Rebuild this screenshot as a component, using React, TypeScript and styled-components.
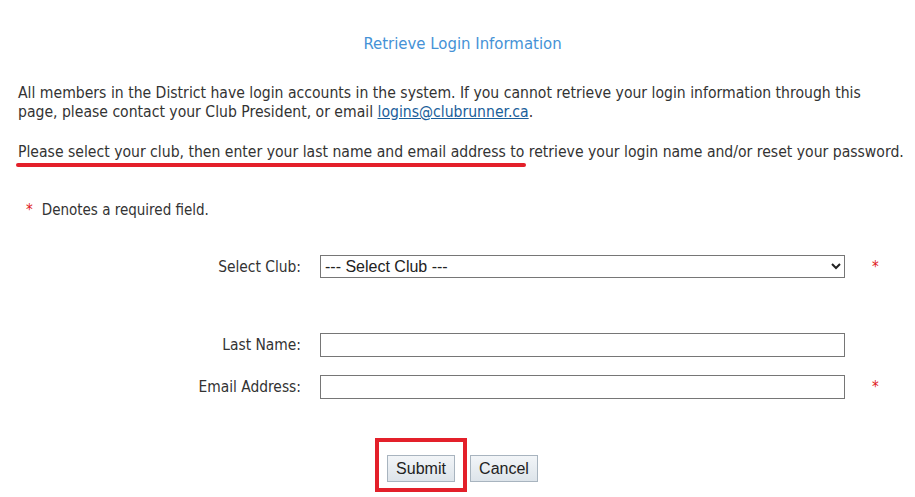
import React from 'react';
import styled, { createGlobalStyle } from 'styled-components';

const GlobalStyle = createGlobalStyle`
  html, body {
    margin: 0;
    padding: 0;
    background: #fff;
  }
  body {
    font-family: "DejaVu Sans Condensed", "DejaVu Sans", sans-serif;
    color: #333;
  }
`;

export default function App() {
  return (
    <>
      <GlobalStyle />
      <Page>
        <Title>Retrieve Login Information</Title>
        <Intro>
          All members in the District have login accounts in the system. If you cannot retrieve your login information through this<br />
          page, please contact your Club President, or email <MailLink href="#">logins@clubrunner.ca</MailLink>.
        </Intro>
        <Instruction>
          <Marked>Please select your club, then enter your last name and email address to</Marked> retrieve your login name and/or reset your password.
        </Instruction>
        <Required>
          <Star>*</Star>
          Denotes a required field.
        </Required>

        <Form>
          <FieldRow $top={35}>
            <Label>Select Club:</Label>
            <Select defaultValue="">
              <option value="">--- Select Club ---</option>
            </Select>
            <Star>*</Star>
          </FieldRow>
          <FieldRow $top={55}>
            <Label>Last Name:</Label>
            <TextInput type="text" />
          </FieldRow>
          <FieldRow $top={18}>
            <Label>Email Address:</Label>
            <TextInput type="text" />
            <Star>*</Star>
          </FieldRow>
        </Form>

        <Actions>
          <Highlighted>
            <Button>Submit</Button>
          </Highlighted>
          <Button>Cancel</Button>
        </Actions>
      </Page>
    </>
  );
}

const Page = styled.div`
  margin-left: 10px;
  width: 905px;
  padding-top: 34px;
  padding-bottom: 10px;
`;

const Title = styled.div`
  text-align: center;
  color: #4592d6;
  font-size: 16.6px;
  line-height: 20px;
  margin-bottom: 30px;
`;

const Intro = styled.p`
  margin: 0 0 21px;
  padding-left: 8px;
  font-size: 15.6px;
  line-height: 19px;
  white-space: nowrap;
`;

const MailLink = styled.a`
  color: #1a5e9a;
  text-decoration: underline;
`;

const Instruction = styled.p`
  margin: 0;
  padding-left: 8px;
  font-size: 15.6px;
  line-height: 19px;
  white-space: nowrap;
`;

const Marked = styled.span`
  position: relative;

  &::after {
    content: '';
    position: absolute;
    left: -2px;
    right: -2px;
    bottom: -6px;
    height: 4px;
    border-radius: 2px;
    background: #e3202a;
  }
`;

const Required = styled.div`
  margin-top: 39px;
  padding-left: 16px;
  font-size: 15px;
  line-height: 19px;
  display: flex;
  align-items: center;
  gap: 9px;
`;

const Star = styled.span`
  color: #e01b22;
  font-size: 15px;
`;

const Form = styled.div`
  display: flex;
  flex-direction: column;
`;

const FieldRow = styled.div<{ $top: number }>`
  display: flex;
  align-items: center;
  gap: 19px;
  margin-top: ${p => p.$top}px;

  & > ${Star} {
    margin-left: 8px;
  }
`;

const Label = styled.label`
  width: 291px;
  text-align: right;
  font-size: 15.4px;
`;

const Select = styled.select`
  width: 525px;
  height: 23px;
  border: 1px solid #767676;
  border-radius: 0;
  background: #fff;
  font-family: "Liberation Sans", Arial, sans-serif;
  font-size: 16px;
  color: #222;
  padding: 0;
`;

const TextInput = styled.input`
  box-sizing: border-box;
  width: 525px;
  height: 24px;
  border: 1px solid #767676;
  margin: 0;
`;

const Actions = styled.div`
  display: flex;
  justify-content: center;
  gap: 15px;
  margin-top: 56px;
`;

const Highlighted = styled.span`
  position: relative;
  display: flex;

  &::after {
    content: '';
    position: absolute;
    top: -17px;
    bottom: -10px;
    left: -12px;
    right: -12px;
    border: 4px solid #e3202a;
    pointer-events: none;
  }
`;

const Button = styled.button`
  width: 68px;
  height: 27px;
  border: 1px solid #a8b4bf;
  border-radius: 0;
  background: linear-gradient(#f2f5f8, #dde4ea);
  font-family: "Liberation Sans", Arial, sans-serif;
  font-size: 16px;
  color: #222;
  padding: 0;
`;
